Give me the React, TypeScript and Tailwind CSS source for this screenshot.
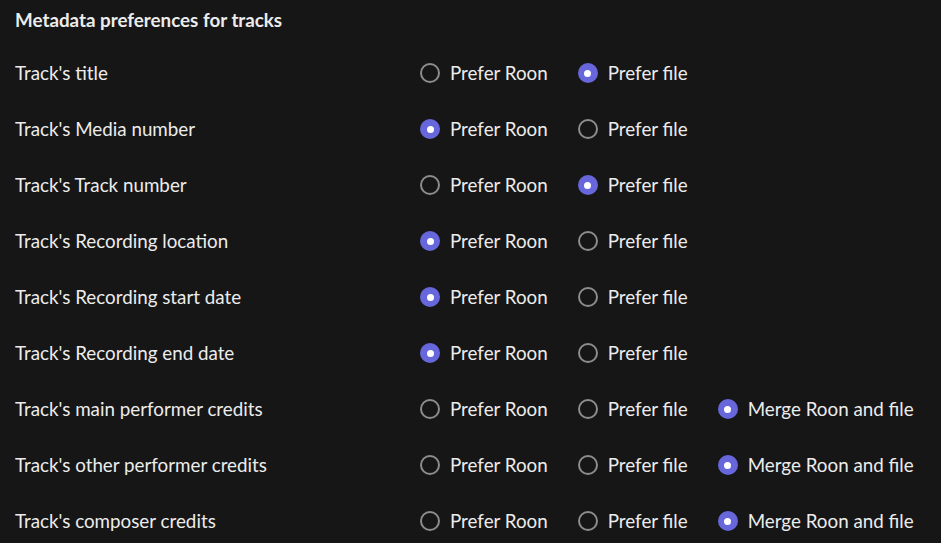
import React from "react";

type Choice = "roon" | "file" | "merge";

interface Row {
  label: string;
  selected: Choice;
  merge?: boolean;
}

const rows: Row[] = [
  { label: "Track's title", selected: "file" },
  { label: "Track's Media number", selected: "roon" },
  { label: "Track's Track number", selected: "file" },
  { label: "Track's Recording location", selected: "roon" },
  { label: "Track's Recording start date", selected: "roon" },
  { label: "Track's Recording end date", selected: "roon" },
  { label: "Track's main performer credits", selected: "merge", merge: true },
  { label: "Track's other performer credits", selected: "merge", merge: true },
  { label: "Track's composer credits", selected: "merge", merge: true },
];

const Radio = ({ checked, text }: { checked: boolean; text: string }) => (
  <label className="flex items-center gap-[10px] cursor-pointer">
    {checked ? (
      <span className="w-5 h-5 rounded-full bg-[#6767db] flex items-center justify-center">
        <span className="w-[7px] h-[7px] rounded-full bg-white" />
      </span>
    ) : (
      <span className="w-5 h-5 rounded-full border-2 border-[#8c8c8c]" />
    )}
    <span>{text}</span>
  </label>
);

const App = () => {
  return (
    <div
      className="w-[941px] h-[543px] overflow-hidden bg-[#161616] text-[#ececec] text-[18.8px] pl-[15px]"
      style={{ fontFamily: "Lato, 'Noto Sans', sans-serif" }}
    >
      <h2 className="font-bold h-[40px] flex items-center">Metadata preferences for tracks</h2>
      <div className="flex flex-col mt-[5px]">
        {rows.map((row) => (
          <div key={row.label} className="flex items-center h-[56px]">
            <div className="w-[405px]">{row.label}</div>
            <div className="flex items-center gap-[30px]">
              <Radio checked={row.selected === "roon"} text="Prefer Roon" />
              <Radio checked={row.selected === "file"} text="Prefer file" />
              {row.merge && (
                <Radio checked={row.selected === "merge"} text="Merge Roon and file" />
              )}
            </div>
          </div>
        ))}
      </div>
    </div>
  );
};

export default App;
